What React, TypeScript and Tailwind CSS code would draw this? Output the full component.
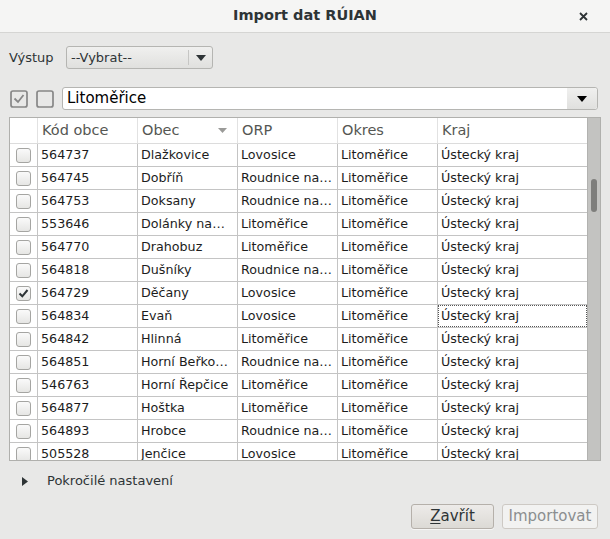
import React from 'react'

type Row = { kod: string; obec: string; orp: string; okres: string; kraj: string; checked?: boolean }

// texty tak, jak je tabulka zkracuje
const RN = 'Roudnice na…'

const rows: Row[] = [
  { kod: '564737', obec: 'Dlažkovice', orp: 'Lovosice', okres: 'Litoměřice', kraj: 'Ústecký kraj' },
  { kod: '564745', obec: 'Dobříň', orp: RN, okres: 'Litoměřice', kraj: 'Ústecký kraj' },
  { kod: '564753', obec: 'Doksany', orp: RN, okres: 'Litoměřice', kraj: 'Ústecký kraj' },
  { kod: '553646', obec: 'Dolánky na…', orp: 'Litoměřice', okres: 'Litoměřice', kraj: 'Ústecký kraj' },
  { kod: '564770', obec: 'Drahobuz', orp: 'Litoměřice', okres: 'Litoměřice', kraj: 'Ústecký kraj' },
  { kod: '564818', obec: 'Dušníky', orp: RN, okres: 'Litoměřice', kraj: 'Ústecký kraj' },
  { kod: '564729', obec: 'Děčany', orp: 'Lovosice', okres: 'Litoměřice', kraj: 'Ústecký kraj', checked: true },
  { kod: '564834', obec: 'Evaň', orp: 'Lovosice', okres: 'Litoměřice', kraj: 'Ústecký kraj' },
  { kod: '564842', obec: 'Hlinná', orp: 'Litoměřice', okres: 'Litoměřice', kraj: 'Ústecký kraj' },
  { kod: '564851', obec: 'Horní Beřko…', orp: RN, okres: 'Litoměřice', kraj: 'Ústecký kraj' },
  { kod: '546763', obec: 'Horní Řepčice', orp: 'Litoměřice', okres: 'Litoměřice', kraj: 'Ústecký kraj' },
  { kod: '564877', obec: 'Hoštka', orp: 'Litoměřice', okres: 'Litoměřice', kraj: 'Ústecký kraj' },
  { kod: '564893', obec: 'Hrobce', orp: RN, okres: 'Litoměřice', kraj: 'Ústecký kraj' },
  { kod: '505528', obec: 'Jenčice', orp: 'Lovosice', okres: 'Litoměřice', kraj: 'Ústecký kraj' },
]

const FOCUS_ROW = 7

function ArrowDown({ className = '' }: { className?: string }) {
  return (
    <svg width="10" height="6" viewBox="0 0 10 6" className={className}>
      <path d="M0 0 H10 L5 6 Z" fill="currentColor" />
    </svg>
  )
}

function CheckCell({ checked }: { checked?: boolean }) {
  return (
    <div className="w-[15px] h-[15px] rounded-[3px] border border-[#a5a5a2] bg-gradient-to-b from-[#fafafa] to-[#e6e6e4] flex items-center justify-center">
      {checked && (
        <svg width="11" height="11" viewBox="0 0 11 11">
          <path d="M1.5 5.5 L4.3 8.3 L9.5 2" stroke="#2e3436" strokeWidth="2" fill="none" />
        </svg>
      )}
    </div>
  )
}

function Cell({ children }: { children: React.ReactNode }) {
  return (
    <div className="px-[3px] border-r border-[#c4c4c4] flex items-center overflow-hidden whitespace-nowrap">
      {children}
    </div>
  )
}

export default function App() {
  const cols = 'grid grid-cols-[28px_100px_100px_100px_100px_1fr]'

  return (
    <div className="w-[610px] h-[539px] bg-[#e8e8e7] flex flex-col font-['DejaVu_Sans',sans-serif] text-[#2e3436] overflow-hidden">
      {/* title bar */}
      <header className="h-[33px] shrink-0 bg-[#f5f5f4] border-b border-[#d5d5d3] grid grid-cols-[1fr_auto_1fr] items-center">
        <div />
        <h1 className="font-bold text-[14.5px] text-[#2e3436]">Import dat RÚIAN</h1>
        <div className="flex justify-end pr-[22px]">
          <svg width="9" height="9" viewBox="0 0 9 9">
            <path d="M1 1 L8 8 M8 1 L1 8" stroke="#2e3436" strokeWidth="1.8" />
          </svg>
        </div>
      </header>

      {/* výstup */}
      <div className="flex items-center px-[9px] mt-[13px] h-[23px]">
        <span className="text-[13px] w-[57px]">Výstup</span>
        <div className="w-[147px] h-[23px] rounded-[3px] border border-[#b5b5b2] bg-gradient-to-b from-[#f0f0ef] to-[#e0e0de] flex items-center text-[13px]">
          <span className="flex-1 pl-[4px]">--Vybrat--</span>
          <span className="w-px h-[15px] bg-[#c6c6c4]" />
          <span className="w-[23px] flex justify-center text-[#2e3436]">
            <ArrowDown />
          </span>
        </div>
      </div>

      {/* filter row */}
      <div className="flex items-center pl-[10px] pr-[12px] mt-[18px] h-[23px]">
        <svg width="18" height="18" viewBox="0 0 18 18">
          <rect x="1" y="1" width="16" height="16" rx="2" stroke="#878787" strokeWidth="1.7" fill="none" />
          <path d="M4.5 8.5 L8 12 L13.5 5" stroke="#878787" strokeWidth="1.8" fill="none" />
        </svg>
        <svg width="18" height="18" viewBox="0 0 18 18" className="ml-[8px]">
          <rect x="1" y="1" width="16" height="16" rx="2" stroke="#878787" strokeWidth="1.7" fill="none" />
        </svg>
        <div className="ml-[8px] flex-1 h-[23px] rounded-[3px] border border-[#b5b5b2] bg-white flex items-center text-[15px] text-black">
          <span className="flex-1 pl-[4px]">Litoměřice</span>
          <span className="w-[30px] h-full rounded-r-[3px] bg-gradient-to-b from-[#f0f0ef] to-[#e0e0de] flex items-center justify-center">
            <ArrowDown />
          </span>
        </div>
      </div>

      {/* table */}
      <div className="mx-[9px] mt-[7px] h-[344px] border border-[#b0b0ad] bg-white flex overflow-hidden">
        <div className="flex-1 flex flex-col overflow-hidden">
          <div className={`${cols} h-[26px] shrink-0 border-b border-[#dcdcdc] text-[14.5px] text-[#555753]`}>
            <div className="border-r border-[#e2e2e2]" />
            <div className="px-[4px] border-r border-[#e2e2e2] flex items-center">Kód obce</div>
            <div className="px-[4px] border-r border-[#e2e2e2] flex items-center justify-between">
              <span>Obec</span>
              <span className="text-[#9a9a98] mr-[6px]">
                <svg width="9" height="5" viewBox="0 0 9 5">
                  <path d="M0 0 H9 L4.5 5 Z" fill="currentColor" />
                </svg>
              </span>
            </div>
            <div className="px-[4px] border-r border-[#e2e2e2] flex items-center">ORP</div>
            <div className="px-[4px] border-r border-[#e2e2e2] flex items-center">Okres</div>
            <div className="px-[4px] flex items-center">Kraj</div>
          </div>
          {rows.map((r, i) => (
            <div
              key={r.kod}
              className={`${cols} h-[23px] shrink-0 border-b border-[#c4c4c4] text-[12.7px] text-[#1c1c1c]`}
            >
              <div className="border-r border-[#c4c4c4] flex items-center justify-center">
                <CheckCell checked={r.checked} />
              </div>
              <Cell>{r.kod}</Cell>
              <Cell>{r.obec}</Cell>
              <Cell>{r.orp}</Cell>
              <Cell>{r.okres}</Cell>
              <div
                className={`px-[3px] flex items-center whitespace-nowrap ${
                  i === FOCUS_ROW ? 'outline outline-1 outline-dotted outline-[#555] -outline-offset-1' : ''
                }`}
              >
                {r.kraj}
              </div>
            </div>
          ))}
        </div>
        {/* scrollbar */}
        <div className="w-[13px] shrink-0 bg-[#c3c3c1] border-l border-[#b2b2b0] pt-[61px] flex justify-center">
          <div className="w-[6px] h-[33px] rounded-full bg-[#7e7e7c]" />
        </div>
      </div>

      {/* expander */}
      <div className="flex items-center h-[20px] mt-[10px] pl-[22px] text-[13px] text-[#2e3436]">
        <svg width="6" height="9" viewBox="0 0 6 9">
          <path d="M0 0 L6 4.5 L0 9 Z" fill="#2e3436" />
        </svg>
        <span className="ml-[19px]">Pokročilé nastavení</span>
      </div>

      {/* buttons */}
      <div className="flex justify-end gap-[8px] pr-[12px] mt-[13px]">
        <button className="w-[83px] h-[25px] rounded-[3px] border border-[#b5b0aa] bg-gradient-to-b from-[#edebe9] to-[#dcdad5] text-[15px] text-[#2e3436] shadow-[0_1px_0_rgba(255,255,255,0.6)]">
          <span className="underline underline-offset-2">Z</span>avřít
        </button>
        <button className="w-[96px] h-[25px] rounded-[3px] border border-[#cdc9c4] bg-[#f2f2f1] text-[15px] text-[#8b8e8f]" disabled>
          Importovat
        </button>
      </div>
    </div>
  )
}
